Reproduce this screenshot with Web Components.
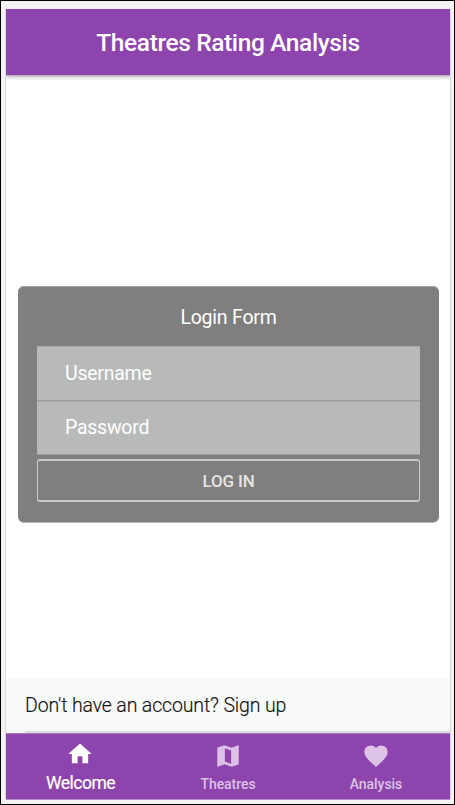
<!DOCTYPE html>
<html lang="en">
<head>
<meta charset="utf-8">
<title>Theatres Rating Analysis</title>
<style>
html,body{margin:0;height:100%;overflow:hidden;background:#fff;font-family:Roboto,"Noto Sans",sans-serif}
</style>
</head>
<body>
<app-shell>
  <app-header slot="header">Theatres Rating Analysis</app-header>
  <login-card heading="Login Form">
    <form-field>Username</form-field>
    <form-field>Password</form-field>
    <outline-button slot="action">LOG IN</outline-button>
  </login-card>
  <signup-row slot="footer">Don't have an account? Sign up</signup-row>
  <tab-bar slot="footer">
    <tab-item icon="home" active>Welcome</tab-item>
    <tab-item icon="map">Theatres</tab-item>
    <tab-item icon="heart">Analysis</tab-item>
  </tab-bar>
</app-shell>
<script>
const define = (name, html, setup) => customElements.define(name, class extends HTMLElement {
  constructor() {
    super();
    this.attachShadow({mode: 'open'}).innerHTML = html;
  }
  connectedCallback() { if (setup) setup(this, this.shadowRoot); }
});

define('app-shell', `<style>
:host{display:block;box-sizing:border-box;width:455px;height:805px;border:1px solid #000;padding:8px 3px 4px 4px;background:#f4f2f4}
.screen{box-sizing:border-box;height:791px;border:solid #d9d9d9;border-width:0 1px;background:#fff;display:flex;flex-direction:column}
main{flex:1;padding:211px 11px 0 12px}
</style><div class="screen"><slot name="header"></slot><main><slot></slot></main><slot name="footer"></slot></div>`);

define('app-header', `<style>
:host{display:flex;height:66px;flex:none;align-items:center;justify-content:center;background:#8e44ad;box-shadow:0 1px 1px #b5b3b6,0 2px 4px rgba(0,0,0,.3);clip-path:inset(0 0 -8px 0);color:#fff;font-size:24.5px;font-weight:500;line-height:32px;letter-spacing:-.38px}
span{padding-top:1px}
</style><span><slot></slot></span>`);

define('login-card', `<style>
:host{display:block;box-sizing:border-box;height:236px;padding:1px 19px 0;background:#7f7f7f;border-radius:6px;box-shadow:inset 0 1px #a0a0a0,0 1px #b4b4b4}
h1{margin:0;height:59px;line-height:62px;text-align:center;color:#fff;font-size:19.5px;font-weight:400;letter-spacing:-.22px}
.action{padding-top:4px}
</style><h1></h1><slot></slot><div class="action"><slot name="action"></slot></div>`,
(el, root) => { root.querySelector('h1').textContent = el.getAttribute('heading'); });

define('form-field', `<style>
:host{display:flex;box-sizing:border-box;height:54.5px;align-items:center;padding:1px 0 0 28px;background:#b8baba;border-bottom:1px solid #9c9d9d;box-shadow:inset 0 1px #a8aaa9;color:#fff;font-size:19.5px;letter-spacing:-.25px}
</style><span><slot></slot></span>`);

define('outline-button', `<style>
:host{display:flex;box-sizing:border-box;height:43px;align-items:center;justify-content:center;padding-top:1px;border:2px solid #c9c9c9;border-left-width:1.5px;border-right-width:1.5px;border-radius:3px;color:#e5e5e5;font-size:17px;font-weight:500;letter-spacing:-.15px}
span{line-height:20px}
</style><span><slot></slot></span>`);

define('signup-row', `<style>
:host{display:block;box-sizing:border-box;height:55px;flex:none;background:#f8f9f9;padding-left:19px;color:#111;font-size:19.5px;font-weight:300;line-height:55px;letter-spacing:-.14px;-webkit-text-stroke:.15px #111}
div{height:53px;border-bottom:2px solid #dcdddd}
</style><div><slot></slot></div>`);

define('tab-bar', `<style>
:host{display:flex;box-sizing:border-box;height:67px;flex:none;background:#8e44ad;border-top:1px solid #a779bb;border-bottom:1px solid #b98bcc}
</style><slot></slot>`);

const icons = {
  home: 'M10 20v-6h4v6h5v-8h3L12 3 2 12h3v8z',
  map: 'M20.8 2.7L15 4.9 9 2.8 3.1 4.7Q2.8 4.8 2.8 5.1V20.8Q2.8 21.3 3.3 21.2L9 19.1l6 2.1 5.9-1.9Q21.2 19.2 21.2 18.9V3.2Q21.2 2.7 20.8 2.7zM14.7 18.8l-5.4-2V5.3l5.4 1.9z',
  heart: 'M12 21.35l-1.45-1.32C5.4 15.36 2 12.28 2 8.5 2 5.42 4.42 3 7.5 3c1.74 0 3.41.81 4.5 2.09C13.09 3.81 14.76 3 16.5 3 19.58 3 22 5.42 22 8.5c0 3.78-3.4 6.86-8.55 11.54L12 21.35z'
};
define('tab-item', `<style>
:host{display:flex;flex:1;flex-direction:column;align-items:center;padding-top:8px;color:#dcc3e6;font-size:14px;font-weight:500;line-height:20px;letter-spacing:-.05px}
:host([active]){padding-top:6px;color:#fff;font-size:17.5px;font-weight:400;letter-spacing:-.5px;-webkit-text-stroke:.2px #fff}
svg{display:block;width:28px;height:28px;fill:currentColor;fill-rule:evenodd}
span{padding-top:4px}
:host([active]) svg{margin-left:-1px;stroke:none}
:host([active]) span{padding:5px 0 0 1px}
</style><svg viewBox="0 0 24 24"><path/></svg><span><slot></slot></span>`,
(el, root) => { root.querySelector('path').setAttribute('d', icons[el.getAttribute('icon')]); });
</script>
</body>
</html>
